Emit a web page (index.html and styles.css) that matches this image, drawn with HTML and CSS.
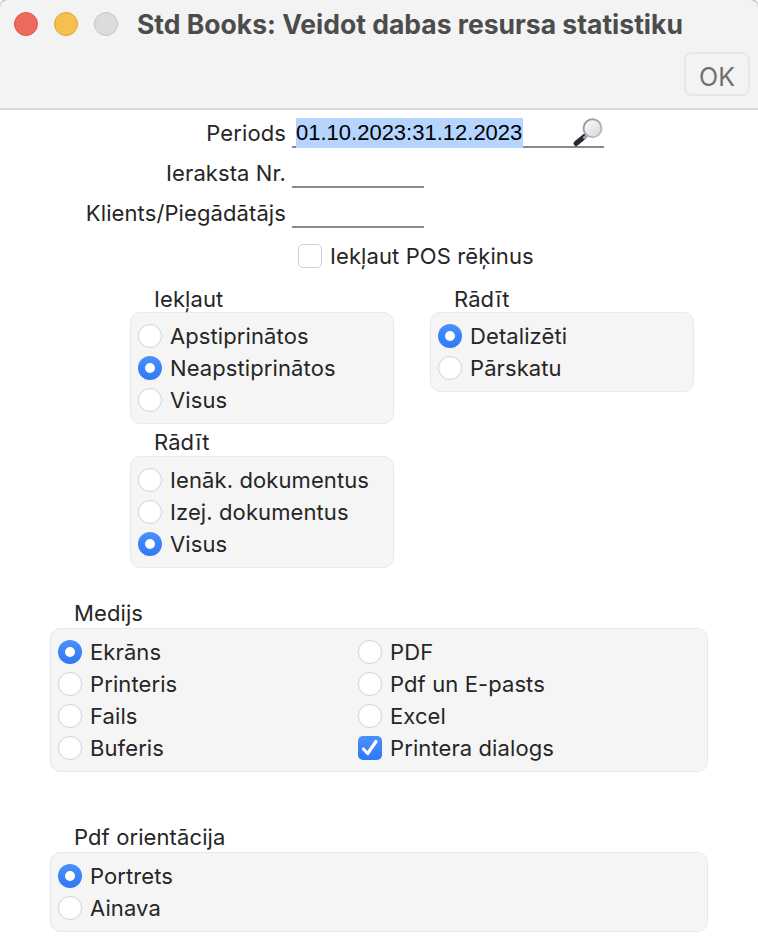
FILE: index.html
```html
<!DOCTYPE html>
<html lang="lv">
<head>
    <meta charset="UTF-8">
    <meta name="viewport" content="width=device-width, initial-scale=1.0">
    <title>Std Books: Veidot dabas resursa statistiku</title>
    <link rel="stylesheet" href="styles.css">
</head>
<body>

    <header class="titlebar">
        <div class="title-row">
            <span class="light light-close"></span>
            <span class="light light-min"></span>
            <span class="light light-max"></span>
            <h1 class="title">Std Books: Veidot dabas resursa statistiku</h1>
        </div>
        <div class="toolbar">
            <button class="btn-ok" type="button">OK</button>
        </div>
    </header>

    <main class="form">
        <div class="field-rows">
            <div class="field-row">
                <label class="field-label">Periods</label>
                <div class="field field-wide">
                    <span class="selected-text">01.10.2023:31.12.2023</span>
                    <svg class="lens" width="32" height="30" viewBox="0 0 32 30">
                        <defs>
                            <linearGradient id="lensGlass" x1="0" y1="0" x2="1" y2="1">
                                <stop offset="0" stop-color="#ffffff"/>
                                <stop offset="1" stop-color="#d2d5da"/>
                            </linearGradient>
                            <linearGradient id="lensRim" x1="0" y1="0" x2="1" y2="1">
                                <stop offset="0" stop-color="#8e939b"/>
                                <stop offset="1" stop-color="#c4c8ce"/>
                            </linearGradient>
                        </defs>
                        <path d="M12.5 18.5 L4 25.5" stroke="#26282c" stroke-width="5" stroke-linecap="round"/>
                        <path d="M15 17.5 L11.5 20.5" stroke="#a0a4aa" stroke-width="3"/>
                        <circle cx="20.5" cy="10.3" r="9" fill="url(#lensGlass)" stroke="url(#lensRim)" stroke-width="2"/>
                    </svg>
                </div>
            </div>
            <div class="field-row">
                <label class="field-label">Ieraksta Nr.</label>
                <div class="field field-short"></div>
            </div>
            <div class="field-row">
                <label class="field-label">Klients/Piegādātājs</label>
                <div class="field field-short"></div>
            </div>
        </div>

        <div class="pos-row">
            <span class="check"></span>
            <span class="opt-text">Iekļaut POS rēķinus</span>
        </div>

        <div class="columns">
            <div class="col">
                <div class="group-title">Iekļaut</div>
                <div class="group">
                    <div class="opt"><span class="radio"></span><span class="opt-text">Apstiprinātos</span></div>
                    <div class="opt"><span class="radio on"></span><span class="opt-text">Neapstiprinātos</span></div>
                    <div class="opt"><span class="radio"></span><span class="opt-text">Visus</span></div>
                </div>
                <div class="group-title group-title-next">Rādīt</div>
                <div class="group">
                    <div class="opt"><span class="radio"></span><span class="opt-text">Ienāk. dokumentus</span></div>
                    <div class="opt"><span class="radio"></span><span class="opt-text">Izej. dokumentus</span></div>
                    <div class="opt"><span class="radio on"></span><span class="opt-text">Visus</span></div>
                </div>
            </div>
            <div class="col">
                <div class="group-title">Rādīt</div>
                <div class="group">
                    <div class="opt"><span class="radio on"></span><span class="opt-text">Detalizēti</span></div>
                    <div class="opt"><span class="radio"></span><span class="opt-text">Pārskatu</span></div>
                </div>
            </div>
        </div>

        <section class="wide-section media">
            <div class="group-title group-title-wide">Medijs</div>
            <div class="group group-2col">
                <div class="opt"><span class="radio on"></span><span class="opt-text">Ekrāns</span></div>
                <div class="opt"><span class="radio"></span><span class="opt-text">PDF</span></div>
                <div class="opt"><span class="radio"></span><span class="opt-text">Printeris</span></div>
                <div class="opt"><span class="radio"></span><span class="opt-text">Pdf un E-pasts</span></div>
                <div class="opt"><span class="radio"></span><span class="opt-text">Fails</span></div>
                <div class="opt"><span class="radio"></span><span class="opt-text">Excel</span></div>
                <div class="opt"><span class="radio"></span><span class="opt-text">Buferis</span></div>
                <div class="opt">
                    <span class="check on">
                        <svg width="24" height="24" viewBox="0 0 24 24"><path d="M5.5 13 L9.7 17.5 L18 5.5" fill="none" stroke="#fff" stroke-width="3.2" stroke-linecap="round" stroke-linejoin="round"/></svg>
                    </span>
                    <span class="opt-text">Printera dialogs</span>
                </div>
            </div>
        </section>

        <section class="wide-section orientation">
            <div class="group-title group-title-wide">Pdf orientācija</div>
            <div class="group">
                <div class="opt"><span class="radio on"></span><span class="opt-text">Portrets</span></div>
                <div class="opt"><span class="radio"></span><span class="opt-text">Ainava</span></div>
            </div>
        </section>
    </main>

</body>
</html>
```

FILE: styles.css
```css
* {
    margin: 0;
    padding: 0;
    box-sizing: border-box;
}

body {
    font-family: 'Inter', 'Liberation Sans', sans-serif;
    font-size: 22px;
    letter-spacing: 0.1px;
    color: #262626;
    background-color: #ffffff;
    width: 758px;
    height: 946px;
    overflow: hidden;
}

/* Barra de titulo */
.titlebar {
    height: 110px;
    background-color: #f3f3f3;
    border-bottom: 2px solid #d9d9d9;
    border-radius: 7px 7px 0 0;
    box-shadow: 0 -1px 1px #9a9a9a;
}

.title-row {
    display: flex;
    align-items: center;
    height: 48px;
    padding-left: 14px;
}

.light {
    width: 24px;
    height: 24px;
    border-radius: 50%;
    margin-right: 16px;
    border: 1px solid;
}

.light-close {
    background-color: #ee6a5f;
    border-color: #d8584e;
}

.light-min {
    background-color: #f6c04f;
    border-color: #dfa63a;
}

.light-max {
    background-color: #dcdcdc;
    border-color: #c6c6c6;
}

.title {
    font-size: 26.5px;
    font-weight: 700;
    letter-spacing: 0;
    color: #4c4c4c;
    margin-left: 3px;
    white-space: nowrap;
}

.toolbar {
    display: flex;
    justify-content: flex-end;
    padding: 4px 8px 0 0;
}

.btn-ok {
    width: 66px;
    height: 44px;
    padding-top: 5px;
    font-family: inherit;
    font-size: 25px;
    color: #707070;
    background-color: #f3f3f3;
    border: 2px solid #e7e7e7;
    border-radius: 8px;
}

/* Campos */
.form {
    padding-top: 8px;
}

.field-rows {
    display: flex;
    flex-direction: column;
    gap: 10px;
}

.field-row {
    display: flex;
    height: 30px;
    gap: 6px;
}

.field-label {
    width: 286px;
    text-align: right;
    line-height: 30px;
}

.field {
    display: flex;
    justify-content: space-between;
    border-bottom: 2px solid #8a8a8a;
}

.field-wide {
    width: 312px;
    padding-left: 4px;
}

.field-short {
    width: 132px;
}

.selected-text {
    font-family: 'Liberation Sans', Arial, sans-serif;
    font-size: 22px;
    letter-spacing: 0;
    line-height: 30px;
    height: 30px;
    padding-right: 1px;
    color: #000000;
    background-color: #b5d5ff;
}

.lens {
    flex-shrink: 0;
}

.pos-row {
    display: flex;
    align-items: center;
    gap: 8px;
    height: 32px;
    margin: 12px 0 0 298px;
}

/* Grupos */
.columns {
    display: flex;
    gap: 36px;
    margin: 14px 0 0 130px;
}

.col {
    width: 264px;
}

.group-title {
    height: 26px;
    line-height: 26px;
    margin-left: 24px;
}

.group-title-next {
    margin-top: 6px;
    line-height: 24px;
}

.group-title-wide {
    height: 28px;
    line-height: 27px;
}

.group {
    background-color: #f5f5f5;
    border: 1px solid #e9e9e9;
    border-radius: 10px;
    padding: 7px;
}

.group-2col {
    display: grid;
    grid-template-columns: 300px 1fr;
}

.opt {
    display: flex;
    align-items: center;
    gap: 8px;
    height: 32px;
}

.radio {
    position: relative;
    width: 24px;
    height: 24px;
    flex-shrink: 0;
    border-radius: 50%;
    background-color: #ffffff;
    border: 1px solid #d2d2d2;
}

.radio.on {
    background: linear-gradient(#4a90fb, #2f78f5);
    border: none;
}

.radio.on::after {
    content: '';
    position: absolute;
    left: 7px;
    top: 7px;
    width: 10px;
    height: 10px;
    border-radius: 50%;
    background-color: #ffffff;
}

.check {
    width: 24px;
    height: 24px;
    flex-shrink: 0;
    border-radius: 5px;
    background-color: #ffffff;
    border: 1px solid #cfcfcf;
}

.check.on {
    background: linear-gradient(#4a90fb, #2f78f5);
    border: none;
}

.check svg {
    display: block;
}

.wide-section {
    margin-left: 50px;
    width: 658px;
}

.media {
    margin-top: 32px;
}

.orientation {
    margin-top: 52px;
}
```
